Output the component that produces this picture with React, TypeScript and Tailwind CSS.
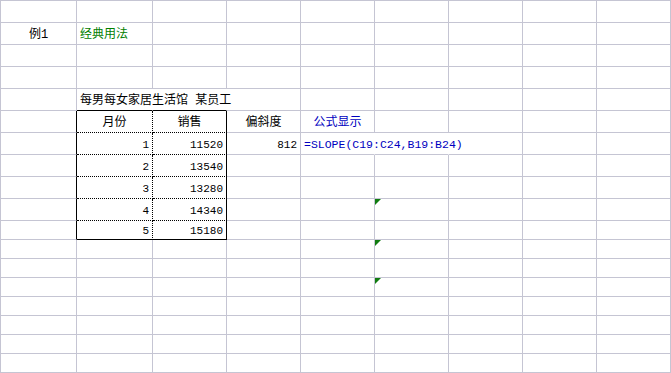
import type { ReactNode } from 'react';

type Align = 'left' | 'center' | 'right';

interface CellData {
    text: ReactNode;
    align?: Align;
    tone?: 'green' | 'blue';
    kind?: 'cjk' | 'num' | 'formula';
}

const ROWS = 18;
const COLS = 9;

// row-col keys, rows are 1-based like the sheet, cols 0 = A
const cells: Record<string, CellData> = {
    '2-0': { text: '例1', align: 'center', kind: 'cjk' },
    '2-1': { text: '经典用法', tone: 'green', kind: 'cjk' },
    '5-1': { text: '每男每女家居生活馆 某员工', kind: 'cjk' },
    '6-1': { text: '月份', align: 'center', kind: 'cjk' },
    '6-2': { text: '销售', align: 'center', kind: 'cjk' },
    '6-3': { text: '偏斜度', align: 'center', kind: 'cjk' },
    '6-4': { text: '公式显示', align: 'center', tone: 'blue', kind: 'cjk' },
    '7-3': { text: '812', align: 'right', kind: 'num' },
    '7-4': { text: '=SLOPE(C19:C24,B19:B24)', tone: 'blue', kind: 'formula' },
};

const sales = [11520, 13540, 13280, 14340, 15180];
sales.forEach((v, i) => {
    cells[`${7 + i}-1`] = { text: String(i + 1), align: 'right', kind: 'num' };
    cells[`${7 + i}-2`] = { text: String(v), align: 'right', kind: 'num' };
});

// gridlines covered by text spilling into the next cell
const hiddenRight = new Set(['5-1', '5-2', '7-4', '7-5']);
// green error markers
const markers = new Set(['10-5', '12-5', '14-5']);

const rightBorder = (r: number, c: number) => {
    if (hiddenRight.has(`${r}-${c}`)) return 'border-r-white';
    if (r >= 6 && r <= 11) {
        if (c === 0 || c === 2) return 'border-r-black';
        if (c === 1) return 'border-r-black ![border-right-style:dotted]';
    }
    return 'border-r-[#c5c5d3]';
};

const bottomBorder = (r: number, c: number) => {
    if (c === 1 || c === 2) {
        if (r === 5 || r === 11) return 'border-b-black';
        if (r >= 6 && r <= 10) return 'border-b-black ![border-bottom-style:dotted]';
    }
    return 'border-b-[#c5c5d3]';
};

const Cell = ({ r, c }: { r: number; c: number }) => {
    const data = cells[`${r}-${c}`];
    const key = `${r}-${c}`;

    return (
        <div
            className={[
                'relative flex items-center pt-[3px] border-r border-b whitespace-nowrap overflow-visible',
                rightBorder(r, c),
                bottomBorder(r, c),
                data?.align === 'center' ? 'justify-center' : data?.align === 'right' ? 'justify-end pr-[3px]' : 'justify-start pl-[3px]',
            ].join(' ')}
        >
            {markers.has(key) && (
                <span className="absolute top-0 left-0 w-0 h-0 border-t-[6px] border-t-[#107c10] border-r-[6px] border-r-transparent" />
            )}
            {data && (
                <span
                    className={[
                        'relative z-10 leading-none',
                        data.kind === 'cjk' ? 'text-[12px]' : data.kind === 'formula' ? 'text-[11.5px]' : 'text-[11px]',
                        data.tone === 'green' ? 'text-[#008000]' : data.tone === 'blue' ? 'text-[#0000c0]' : 'text-black',
                    ].join(' ')}
                >
                    {data.text}
                </span>
            )}
        </div>
    );
};

export default function App() {
    return (
        <div className="w-[671px] h-[373px] overflow-hidden bg-white font-['Liberation_Mono','Noto_Sans_CJK_SC',monospace]">
            <div className="grid grid-cols-[76px_76px_74px_74px_74px_74px_74px_74px_74px] grid-rows-[repeat(10,22px)_repeat(8,19px)] border-l border-t border-l-[#c5c5d3] border-t-[#c5c5d3]">
                {Array.from({ length: ROWS }, (_, ri) =>
                    Array.from({ length: COLS }, (_, c) => <Cell key={`${ri + 1}-${c}`} r={ri + 1} c={c} />)
                )}
            </div>
        </div>
    );
}
